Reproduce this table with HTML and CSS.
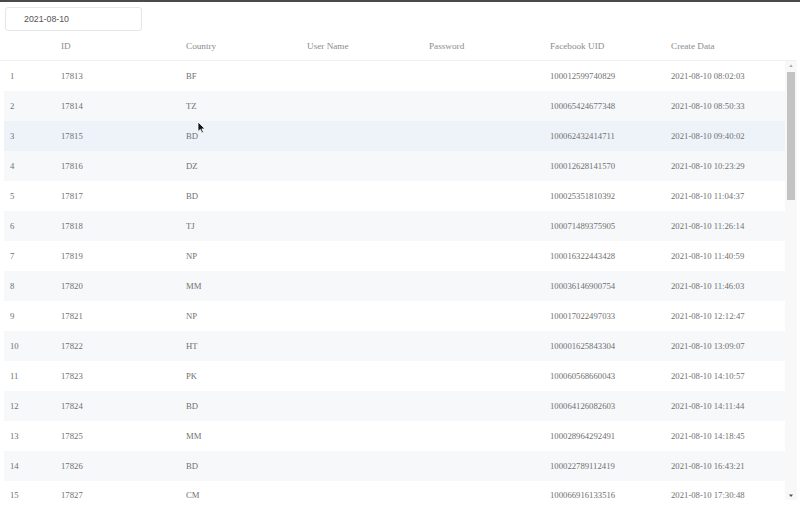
FILE: index.html
```html
<!DOCTYPE html>
<html>
<head>
<meta charset="utf-8">
<link rel="stylesheet" href="styles.css">
</head>
<body>
<div class="page">
  <div class="toolbar">
    <div class="date-input">2021-08-10</div>
  </div>
  <div class="table">
    <div class="row head">
      <div></div><div>ID</div><div>Country</div><div>User Name</div><div>Password</div><div>Facebook UID</div><div>Create Data</div>
    </div>
    <div class="body">
      <div class="rows">
        <div class="row"><div>1</div><div>17813</div><div>BF</div><div></div><div></div><div>100012599740829</div><div>2021-08-10 08:02:03</div></div>
        <div class="row"><div>2</div><div>17814</div><div>TZ</div><div></div><div></div><div>100065424677348</div><div>2021-08-10 08:50:33</div></div>
        <div class="row hover"><div>3</div><div>17815</div><div>BD</div><div></div><div></div><div>100062432414711</div><div>2021-08-10 09:40:02</div></div>
        <div class="row"><div>4</div><div>17816</div><div>DZ</div><div></div><div></div><div>100012628141570</div><div>2021-08-10 10:23:29</div></div>
        <div class="row"><div>5</div><div>17817</div><div>BD</div><div></div><div></div><div>100025351810392</div><div>2021-08-10 11:04:37</div></div>
        <div class="row"><div>6</div><div>17818</div><div>TJ</div><div></div><div></div><div>100071489375905</div><div>2021-08-10 11:26:14</div></div>
        <div class="row"><div>7</div><div>17819</div><div>NP</div><div></div><div></div><div>100016322443428</div><div>2021-08-10 11:40:59</div></div>
        <div class="row"><div>8</div><div>17820</div><div>MM</div><div></div><div></div><div>100036146900754</div><div>2021-08-10 11:46:03</div></div>
        <div class="row"><div>9</div><div>17821</div><div>NP</div><div></div><div></div><div>100017022497033</div><div>2021-08-10 12:12:47</div></div>
        <div class="row"><div>10</div><div>17822</div><div>HT</div><div></div><div></div><div>100001625843304</div><div>2021-08-10 13:09:07</div></div>
        <div class="row"><div>11</div><div>17823</div><div>PK</div><div></div><div></div><div>100060568660043</div><div>2021-08-10 14:10:57</div></div>
        <div class="row"><div>12</div><div>17824</div><div>BD</div><div></div><div></div><div>100064126082603</div><div>2021-08-10 14:11:44</div></div>
        <div class="row"><div>13</div><div>17825</div><div>MM</div><div></div><div></div><div>100028964292491</div><div>2021-08-10 14:18:45</div></div>
        <div class="row"><div>14</div><div>17826</div><div>BD</div><div></div><div></div><div>100022789112419</div><div>2021-08-10 16:43:21</div></div>
        <div class="row last"><div>15</div><div>17827</div><div>CM</div><div></div><div></div><div>100066916133516</div><div>2021-08-10 17:30:48</div></div>
      </div>
      <div class="scrollbar">
        <div class="sb-btn"><svg width="12" height="9" viewBox="0 0 12 9"><path d="M4.2 6 L6 3.6 L7.8 6 Z" fill="#a8a8a8"/></svg></div>
        <div class="sb-track"><div class="sb-thumb"></div></div>
        <div class="sb-btn"><svg width="12" height="9" viewBox="0 0 12 9"><path d="M4 3.5 L8 3.5 L6 6 Z" fill="#505050"/></svg></div>
      </div>
    </div>
  </div>
  <svg class="cursor" width="9" height="13" viewBox="0 0 9 13"><path d="M1 1 L1 10.5 L3.3 8.4 L5 12 L6.5 11.3 L4.9 7.9 L8 7.9 Z" fill="#111" stroke="#fff" stroke-width="0.8"/></svg>
</div>
</body>
</html>
```

FILE: styles.css
```css
html, body {
  margin: 0;
  padding: 0;
  background: #fff;
}
.page {
  position: relative;
  width: 800px;
  height: 507px;
  overflow: hidden;
  border-top: 2px solid #4a4a4a;
  box-sizing: border-box;
  font-family: "Liberation Serif", "Times New Roman", serif;
}
.toolbar {
  padding: 5px 0 0 5px;
  box-sizing: border-box;
  height: 30px;
}
.date-input {
  width: 137px;
  height: 24px;
  box-sizing: border-box;
  border: 1px solid #e4e6ea;
  border-radius: 3px;
  padding-left: 18px;
  font-family: "Liberation Sans", Arial, sans-serif;
  font-size: 8.8px;
  color: #555;
  line-height: 22px;
}
.table {
  margin-left: 4px;
}
.row {
  display: grid;
  grid-template-columns: 51px 125px 121px 122px 121px 121px 1fr;
  height: 30px;
  align-items: center;
  font-size: 8.7px;
  color: #707070;
}
.row > div {
  padding-left: 6px;
  white-space: nowrap;
}
.row.head {
  margin-left: -4px;
  padding-left: 4px;
  height: 29px;
  border-bottom: 1px solid #eef0f3;
  font-size: 9.2px;
  color: #8c8c8c;
  width: 796px;
  box-sizing: border-box;
}
.body {
  display: flex;
  height: 439px;
  width: 793px;
}
.rows {
  width: 781px;
  height: 439px;
  overflow: hidden;
}
.rows .row:nth-child(even) {
  background: #f6f8fa;
}
.rows .row.hover {
  background: #eef3f9;
}
.rows .row.last {
  height: 19px;
  align-items: end;
}
.scrollbar {
  width: 12px;
  display: flex;
  flex-direction: column;
  background: #f8f8f8;
}
.sb-btn {
  height: 9px;
  line-height: 0;
}
.sb-track {
  flex: 1;
  padding: 2px 2px 0 2px;
}
.sb-thumb {
  height: 128px;
  background: #c3c3c3;
}
.cursor {
  position: absolute;
  left: 197px;
  top: 119px;
}
```
